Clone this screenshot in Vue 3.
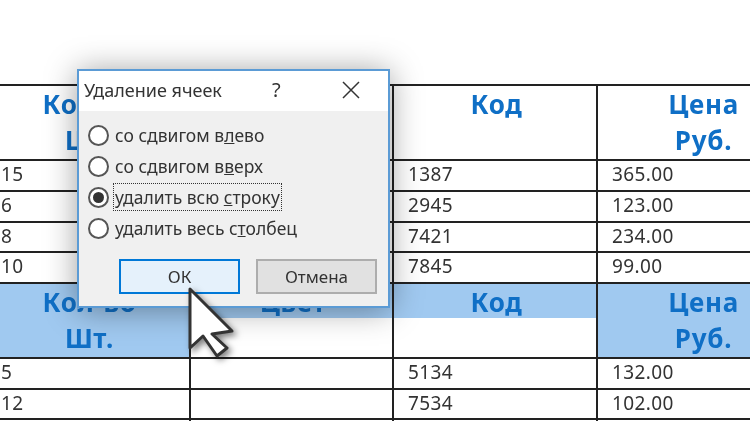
<script setup>
const rows = [
  { type: 'head', cells: [['Кол-во', 'Шт.'], ['Цвет'], ['Код'], ['Цена', 'Руб.']] },
  { cells: ['15', '', '1387', '365.00'] },
  { cells: ['6', '', '2945', '123.00'] },
  { cells: ['8', '', '7421', '234.00'] },
  { cells: ['10', '', '7845', '99.00'] },
  { type: 'head', selected: true, cells: [['Кол-во', 'Шт.'], ['Цвет'], ['Код'], ['Цена', 'Руб.']] },
  { cells: ['5', '', '5134', '132.00'] },
  { cells: ['12', '', '7534', '102.00'] },
  { cells: ['', '', '', ''] }
]

const options = [
  { before: 'со сдвигом в', key: 'л', after: 'ево' },
  { before: 'со сдвигом в', key: 'в', after: 'ерх' },
  { before: 'удалить всю ', key: 'с', after: 'троку', checked: true },
  { before: 'удалить весь с', key: 'т', after: 'олбец' }
]
</script>

<template>
  <div class="page">
    <div class="sheet">
      <template v-for="(row, r) in rows" :key="r">
        <div
          v-for="(cell, c) in row.cells"
          :key="c"
          class="cell"
          :class="{
            head: row.type === 'head',
            full: row.selected && (c === 0 || c === 3),
            half: row.selected && (c === 1 || c === 2)
          }"
        >
          <template v-if="row.type === 'head'">
            <div v-for="line in cell" :key="line" class="head-line">{{ line }}</div>
          </template>
          <template v-else>{{ cell }}</template>
        </div>
      </template>
    </div>

    <div class="dialog">
      <div class="title-bar">
        <span class="title">Удаление ячеек</span>
        <span class="help">?</span>
        <svg class="close" width="18" height="18" viewBox="0 0 18 18">
          <path d="M1 1 L17 17 M17 1 L1 17" stroke="#333" stroke-width="1.5" fill="none" />
        </svg>
      </div>
      <div class="body">
        <div class="options">
          <div v-for="opt in options" :key="opt.key + opt.before" class="option">
            <span class="radio" :class="{ on: opt.checked }"></span>
            <span class="label" :class="{ focus: opt.checked }">{{ opt.before }}<u>{{ opt.key }}</u>{{ opt.after }}</span>
          </div>
        </div>
        <div class="buttons">
          <div class="btn primary">ОК</div>
          <div class="btn">Отмена</div>
        </div>
      </div>
    </div>

    <svg class="cursor" width="60" height="84" viewBox="0 0 60 84">
      <path d="M6 4 L6 63 L19 51 L33 71 L43 63 L28 49 L48 46 Z" fill="#fff" stroke="#333" stroke-width="3" stroke-linejoin="round" />
    </svg>
  </div>
</template>

<style scoped>
.page {
  position: relative;
  width: 750px;
  height: 421px;
  overflow: hidden;
  background: #fff;
  font-family: "Noto Sans", "Open Sans", sans-serif;
  filter: blur(0.5px);
}

.sheet {
  display: grid;
  grid-template-columns: 204px 203px 204px 210px;
  grid-template-rows: 75px repeat(4, 30.75px) 75px 30.5px 30.5px 30px;
  margin: 84px 0 0 -13px;
  width: 821px;
  border-top: 2px solid #222;
}

.cell {
  box-sizing: border-box;
  padding: 1px 0 0 14px;
  border-right: 2px solid #222;
  border-bottom: 2px solid #222;
  font-size: 19px;
  letter-spacing: 0.4px;
  line-height: 24px;
  color: #333;
}

.cell.head {
  padding: 0 0 0 3px;
  text-align: center;
}

.head-line {
  font-size: 26px;
  font-weight: 700;
  letter-spacing: 0.7px;
  line-height: 36px;
  color: #0f6fc6;
}

.cell.full {
  background: #a0c9f0;
}

.cell.half {
  background: linear-gradient(#a0c9f0 34px, #fff 34px);
}

.dialog {
  position: absolute;
  left: 77px;
  top: 69px;
  box-sizing: border-box;
  width: 313px;
  height: 239px;
  border: 2px solid #5b9bd5;
  background: #f0f0f0;
  box-shadow: 0 2px 30px rgba(0, 0, 0, 0.38);
  display: flex;
  flex-direction: column;
}

.title-bar {
  box-sizing: border-box;
  height: 40px;
  background: #fff;
  display: flex;
  align-items: center;
  padding: 0 0 3px 5px;
  color: #333;
}

.title {
  width: 188px;
  font-size: 18px;
}

.help {
  width: 70px;
  font-size: 20px;
}

.close {
  flex: none;
}

.body {
  flex: 1;
  display: flex;
  flex-direction: column;
  padding: 13px 11px 12px 9px;
}

.options {
  display: flex;
  flex-direction: column;
  gap: 9px;
}

.option {
  display: flex;
  align-items: center;
  height: 22px;
  color: #333;
  font-size: 17.5px;
}

.radio {
  box-sizing: border-box;
  width: 21px;
  height: 21px;
  border: 2px solid #555;
  border-radius: 50%;
  background: #fff;
  margin-right: 4px;
  display: flex;
  align-items: center;
  justify-content: center;
}

.radio.on::after {
  content: '';
  width: 11px;
  height: 11px;
  border-radius: 50%;
  background: #333;
}

.label {
  padding: 1px 1px;
  border: 1px solid transparent;
}

.label.focus {
  border: 1px dotted #333;
}

.buttons {
  margin-top: auto;
  display: flex;
  justify-content: flex-end;
  gap: 16px;
}

.btn {
  box-sizing: border-box;
  width: 121px;
  height: 35px;
  border: 2px solid #adadad;
  background: #e1e1e1;
  color: #333;
  font-size: 17px;
  display: flex;
  align-items: center;
  justify-content: center;
}

.btn.primary {
  border-color: #0078d7;
  background: #e5f1fb;
}

.cursor {
  position: absolute;
  left: 184px;
  top: 285px;
  filter: drop-shadow(3px 3px 3px rgba(0, 0, 0, 0.5));
}
</style>
